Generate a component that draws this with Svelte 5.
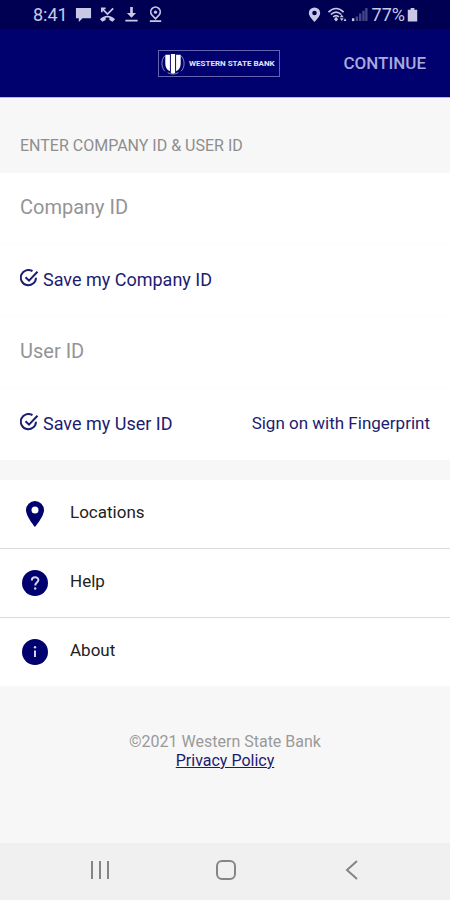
<script lang="ts">
	let companyId = $state('');
	let userId = $state('');
	let saveCompany = $state(true);
	let saveUser = $state(true);

	const links = [
		{ icon: 'pin', label: 'Locations' },
		{ icon: 'help', label: 'Help' },
		{ icon: 'info', label: 'About' }
	];
</script>

{#snippet check(on: boolean)}
	<svg viewBox="0 0 20 20" aria-hidden="true">
		<path d="M12.500 2.200A7.600 7.600 0 1 0 16 8.800" />
		{#if on}<path d="M5.500 8.200 9 11.600 17.500 2.800" />{/if}
	</svg>
{/snippet}

<div class="screen">
	<div class="status">
		<div class="group">
			<span class="time">8:41</span>
			<svg class="glyph" viewBox="0 0 18 18"><path d="M1 2h16v11H8l-4 4v-4H1z" /></svg>
			<svg class="glyph" viewBox="0 0 18 18">
				<path d="M1 14c4.400-5 11.600-5 16 0l-2.600 2.800-3.400-2v-2.300c-1.300-.4-2.700-.4-4 0v2.300l-3.400 2z" />
				<path class="line" d="M3 6.500V2.500h4M3 2.500l6 6 6-6" />
			</svg>
			<svg class="glyph" viewBox="0 0 18 18">
				<path d="M7.600 1h2.800v6.500h3.400L9 12.500 4.200 7.500h3.400zM2.500 14.500h13v1.800h-13z" />
			</svg>
			<svg class="glyph" viewBox="0 0 18 18">
				<path class="line" d="M9 13.500 5.200 9.500a5 5 0 1 1 7.600 0zM3 16h12" />
				<circle cx="9" cy="6.500" r="1.700" />
			</svg>
		</div>
		<div class="group right">
			<svg class="glyph" viewBox="0 0 18 18">
				<path fill-rule="evenodd" d="M9 1.500a6 6 0 0 0-6 6c0 3.800 6 9.500 6 9.500s6-5.700 6-9.500a6 6 0 0 0-6-6zm0 3.500a2.400 2.400 0 1 1 0 4.800A2.400 2.400 0 0 1 9 5z" />
			</svg>
			<svg class="glyph wifi" viewBox="0 0 20 18">
				<path class="line" d="M1 6.500c5-5 11-5 16 0M3.500 9c3.500-3.300 7.500-3.300 11 0M6 11.500c2-1.800 4-1.800 6 0" />
				<path d="M9 11.500 11.200 14 9 16.500 6.800 14zM15 9l2 3h-4zM15 16l2-3h-4zM18.500 13l1.500 3h-3z" />
			</svg>
			<svg class="glyph" viewBox="0 0 18 18">
				<path d="M1 13h2.500v3H1z" />
				<path class="dim" d="M5 11h2.500v5H5zM8.500 8H11v8H8.500zM12 5h2.500v11H12zM15 2h2.500v14H15z" />
			</svg>
			<span class="time">77%</span>
			<svg class="glyph battery" viewBox="0 0 12 18"><path d="M4 2h4v2h3v12.500H1V4h3z" /></svg>
		</div>
	</div>

	<header>
		<div class="logo">
			<svg viewBox="0 0 26 26" aria-hidden="true">
				<path d="M5 4h4.800v17C6.500 19.500 5 17 5 13zM10.800 3h4.400v20l-2.200 1-2.200-1zM16.200 4H21v9c0 4-1.500 6.500-4.800 8z" />
				<path class="ring" d="M4.500 5C.5 9 .5 17 4.500 21M21.500 5c4 4 4 12 0 16M7.500 22.500c3.500 2 7.500 2 11 0" />
			</svg>
			<span>WESTERN STATE BANK</span>
		</div>
		<button type="submit" form="signon" class="continue">CONTINUE</button>
	</header>

	<main>
		<h1>ENTER COMPANY ID &amp; USER ID</h1>

		<form id="signon" onsubmit={(e) => e.preventDefault()}>
			<div class="field">
				<input type="text" aria-label="Company ID" placeholder="Company ID" bind:value={companyId} />
			</div>
			<div class="field">
				<label class="save">
					<span class="tick"><input type="checkbox" bind:checked={saveCompany} />{@render check(saveCompany)}</span>
					Save my Company ID
				</label>
			</div>
			<div class="field">
				<input type="text" aria-label="User ID" placeholder="User ID" bind:value={userId} />
			</div>
			<div class="field">
				<label class="save">
					<span class="tick"><input type="checkbox" bind:checked={saveUser} />{@render check(saveUser)}</span>
					Save my User ID
				</label>
				<button type="button" class="finger">Sign on with Fingerprint</button>
			</div>
		</form>

		<nav class="links">
			{#each links as link}
				<a href="#{link.label.toLowerCase()}">
					<svg viewBox="0 0 28 28" aria-hidden="true">
						{#if link.icon === 'pin'}
							<path fill-rule="evenodd" d="M14 1a9 9 0 0 0-9 9c0 6.500 9 17 9 17s9-10.500 9-17a9 9 0 0 0-9-9zm0 5.500a3.500 3.500 0 1 1 0 7 3.500 3.500 0 0 1 0-7z" />
						{:else}
							<circle cx="14" cy="14" r="13" />
							{#if link.icon === 'help'}
								<path class="mark" d="M10.800 11.500c0-4.400 6.600-4.200 6.600-.4 0 2.400-3.200 2.600-3.200 5.400" />
								<circle class="dot" cx="14.200" cy="19.500" r="1.200" />
							{:else}
								<path class="mark" d="M14 12.500V19" />
								<circle class="dot" cx="14" cy="9.300" r="1.200" />
							{/if}
						{/if}
					</svg>
					<span>{link.label}</span>
				</a>
			{/each}
		</nav>

		<footer>
			<p>©2021 Western State Bank</p>
			<a href="#privacy">Privacy Policy</a>
		</footer>
	</main>

	<div class="sysnav">
		<button type="button" aria-label="Recent apps">
			<svg viewBox="0 0 24 24"><path d="M4 3v18M12 3v18M20 3v18" /></svg>
		</button>
		<button type="button" aria-label="Home">
			<svg viewBox="0 0 24 24"><rect x="3" y="3" width="18" height="18" rx="5" /></svg>
		</button>
		<button type="button" aria-label="Back">
			<svg viewBox="0 0 24 24"><path d="M17 3 7 12l10 9" /></svg>
		</button>
	</div>
</div>

<style>
	:global(body) { margin: 0; }

	.screen {
		display: flex;
		flex-direction: column;
		min-height: 100vh;
		background: #f7f7f7;
		color: #222;
		font-family: Roboto, sans-serif;
		font-size: 17px;
	}

	button {
		padding: 0;
		border: 0;
		background: none;
		font: inherit;
		cursor: pointer;
	}

	.status {
		display: flex;
		align-items: center;
		justify-content: space-between;
		height: 29px;
		padding: 0 31px 0 33px;
		background: #000052;
		color: #c9c9e6;
	}

	.group {
		display: flex;
		align-items: center;
		gap: 7px;
	}

	.right { gap: 4px; }

	.time { font-size: 18px; }

	.glyph {
		width: 17px;
		height: 17px;
		fill: #c9c9e6;
	}

	.glyph .line {
		fill: none;
		stroke: #c9c9e6;
		stroke-width: 1.8;
	}

	.glyph .dim { fill: #45458a; }
	.wifi { width: 20px; }
	.battery { width: 13px; margin-left: -3px; }

	header {
		display: grid;
		grid-template-columns: 1fr auto 1fr;
		align-items: center;
		height: 68px;
		padding: 0 24px 0 12px;
		background: #00006f;
		border-bottom: 1px solid #b9b9d0;
	}

	.logo {
		grid-column: 2;
		display: flex;
		align-items: center;
		gap: 2px;
		width: 120px;
		height: 25px;
		border: 1px solid #6464ac;
		color: #e4e4f4;
		font-size: 8px;
		font-weight: 700;
		white-space: nowrap;
	}

	.logo svg {
		flex: none;
		width: 28px;
		height: 25px;
		fill: #fff;
	}

	.logo .ring {
		fill: none;
		stroke: #8c8cc4;
	}

	.continue {
		justify-self: end;
		color: #a9a9dc;
		font-weight: 500;
	}

	h1 {
		margin: 0;
		padding: 36px 20px 15px;
		color: #8e8e8e;
		font-size: 16px;
		font-weight: 400;
		line-height: 24px;
	}

	form { background: #fff; }

	.field {
		display: flex;
		align-items: center;
		justify-content: space-between;
		height: 68px;
		padding: 0 20px 3px;
		border-bottom: 1px solid #fcfcfc;
	}

	.field:last-child { border-bottom: 0; }

	input[type='text'] {
		width: 100%;
		padding: 0;
		border: 0;
		outline: 0;
		background: none;
		color: #222;
		font: inherit;
		font-size: 20px;
	}

	input::placeholder { color: #949494; opacity: 1; }

	.save {
		display: flex;
		align-items: center;
		gap: 3px;
		color: #1c1c70;
		font-size: 18px;
		cursor: pointer;
	}

	.finger { color: #1c1c70; }

	.tick { display: grid; }

	.tick input {
		grid-area: 1 / 1;
		appearance: none;
		width: 20px;
		height: 20px;
		margin: 0;
	}

	.tick :global(svg) {
		grid-area: 1 / 1;
		width: 20px;
		height: 20px;
		fill: none;
		stroke: #1c1c70;
		stroke-width: 2;
		pointer-events: none;
	}

	.links {
		margin-top: 20px;
		background: #fff;
	}

	.links a {
		display: flex;
		align-items: center;
		gap: 21px;
		height: 68px;
		padding: 0 21px;
		color: #222;
		text-decoration: none;
	}

	.links a + a { border-top: 1px solid #d9d9d9; }

	.links span { padding-bottom: 5px; }

	.links svg {
		width: 28px;
		height: 28px;
		fill: #00006f;
	}

	.links .mark {
		fill: none;
		stroke: #d5d5ee;
		stroke-width: 2;
	}

	.links .dot { fill: #d5d5ee; }

	footer {
		padding: 46px 20px;
		color: #9a9a9a;
		font-size: 16px;
		line-height: 19px;
		text-align: center;
	}

	footer p { margin: 0; }
	footer a { color: #1c1c70; }

	.sysnav {
		display: grid;
		grid-template-columns: repeat(3, 1fr);
		height: 54px;
		margin-top: auto;
		padding: 0 35px 3px 37px;
		background: #f0f0f0;
	}

	.sysnav button {
		display: grid;
		place-items: center;
	}

	.sysnav svg {
		width: 24px;
		height: 24px;
		fill: none;
		stroke: #858585;
		stroke-width: 2;
	}
</style>
